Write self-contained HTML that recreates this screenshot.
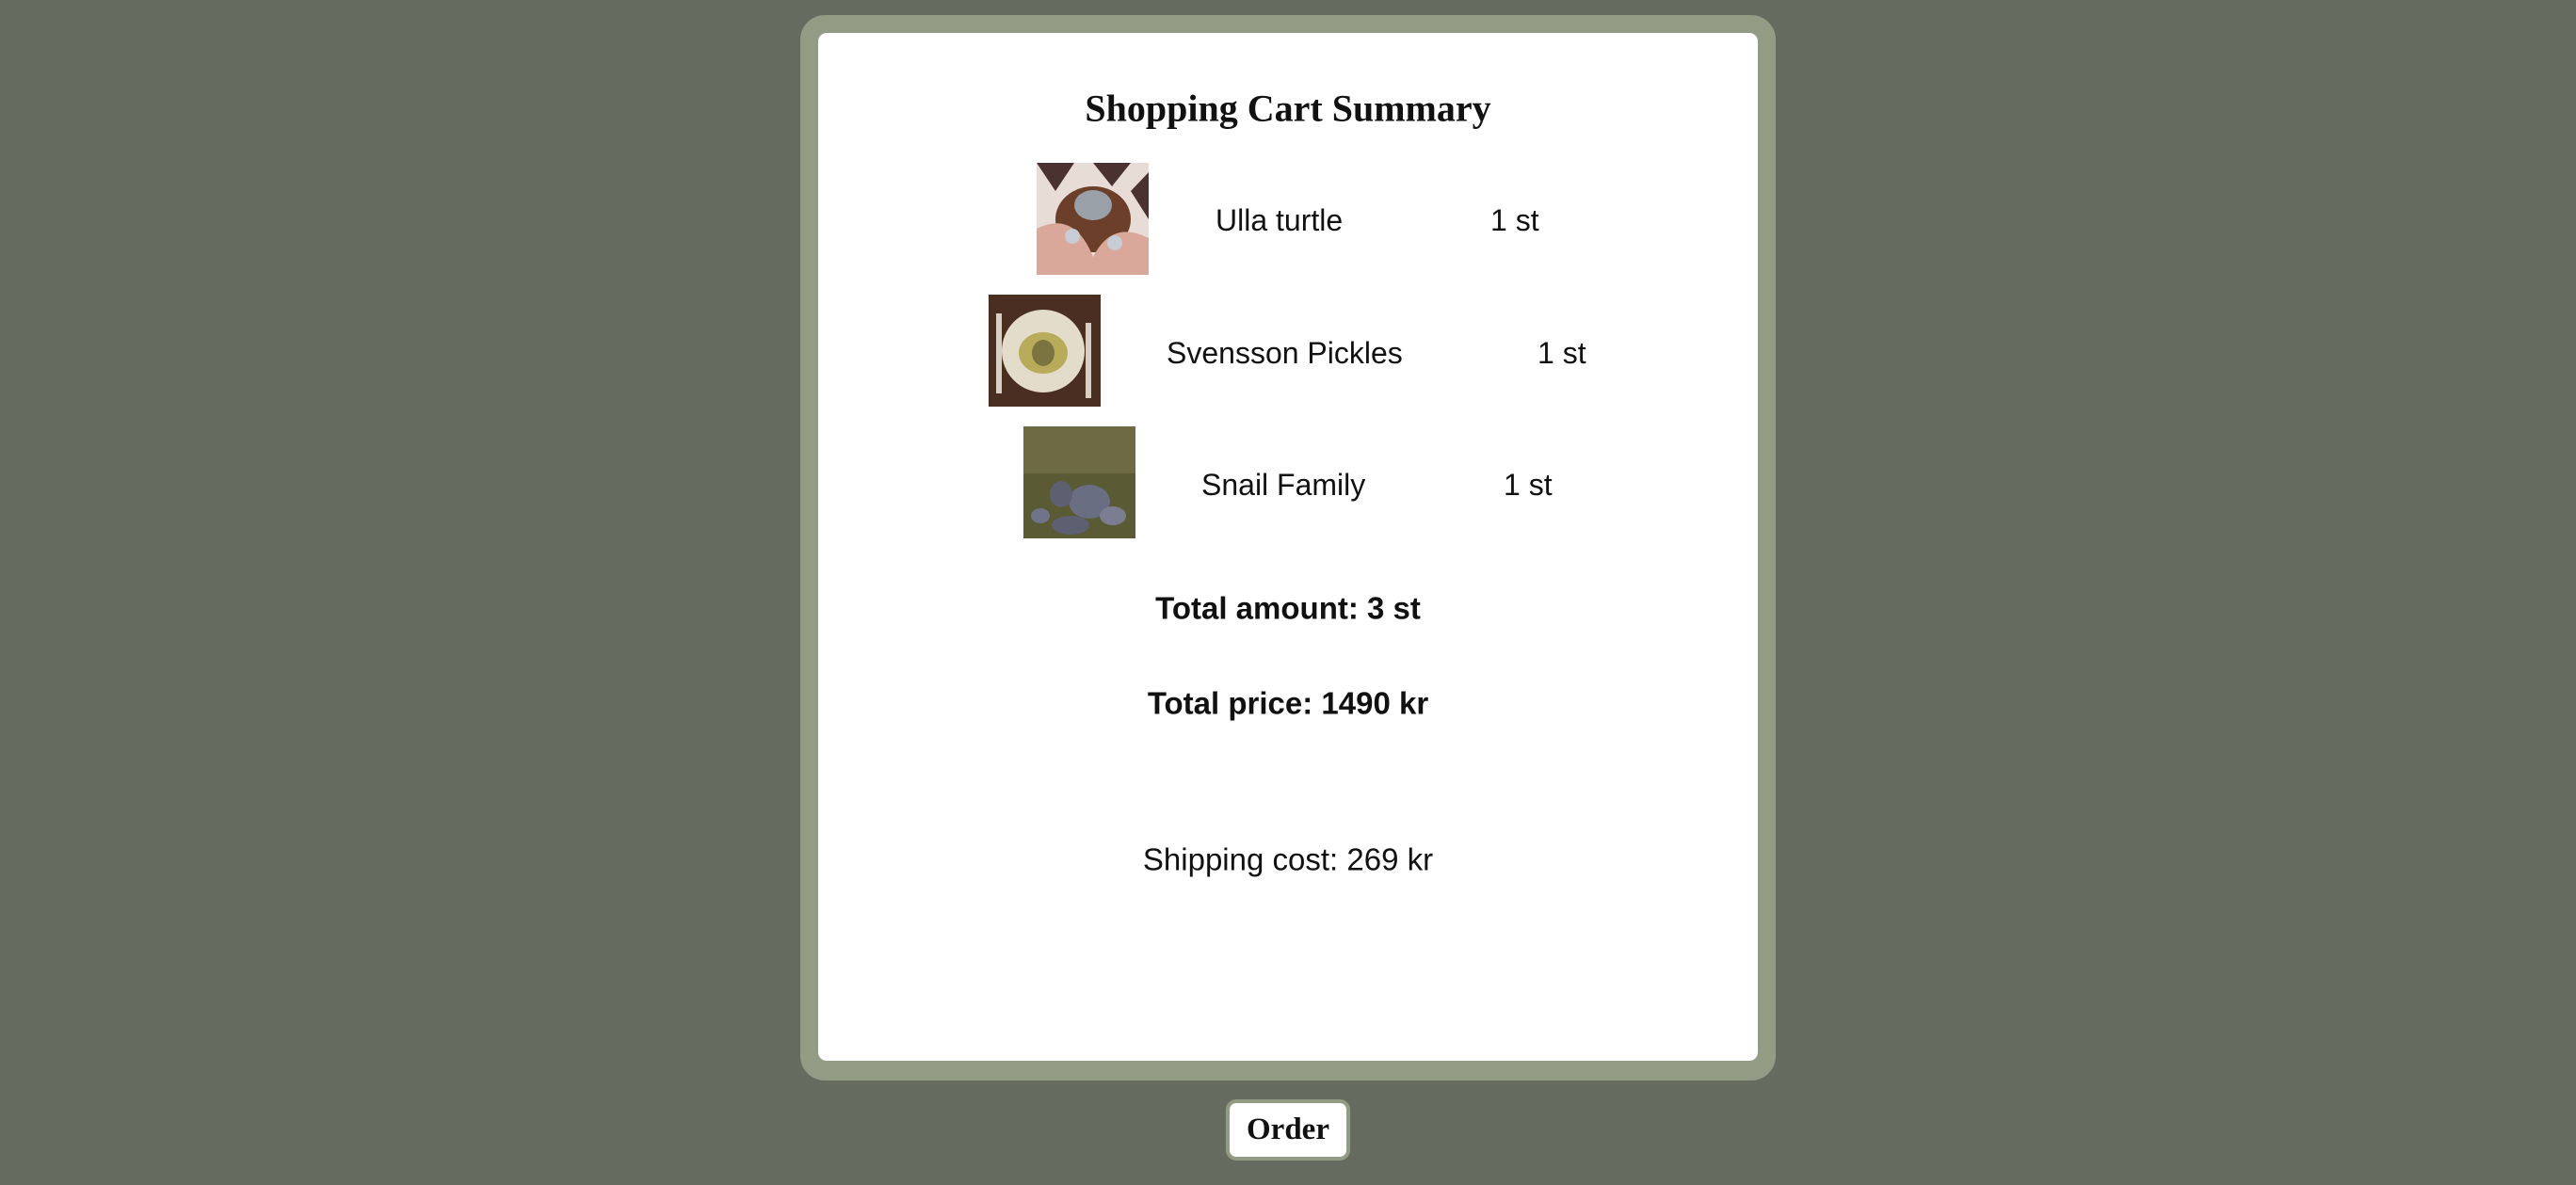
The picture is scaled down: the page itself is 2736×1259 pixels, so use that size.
<!DOCTYPE html>
<html><head><meta charset="utf-8"><style>
html,body{margin:0;padding:0;width:2736px;height:1259px;background:#656b5f;overflow:hidden;font-family:"Liberation Sans",sans-serif;color:#111}
.outer{position:absolute;left:850px;top:16px;width:1036px;height:1132px;background:#929c84;border-radius:26px}
.inner{position:absolute;left:869px;top:35px;width:998px;height:1092px;background:#fff;border-radius:9px}
.t{position:absolute;white-space:nowrap;line-height:1}
.c{transform:translate(-50%,-50%)}
.m{transform:translateY(-50%)}
.img{position:absolute;width:119px;height:119px;overflow:hidden}
.btn{position:absolute;left:1302px;top:1168px;width:124px;height:57px;background:#fff;border:4px solid #929c84;border-radius:11px;font:bold 33px "Liberation Serif",serif;display:flex;align-items:center;justify-content:center}
</style></head><body>
<div class="outer"></div><div class="inner"></div>
<div class="t c" style="left:1368px;top:115px;font:bold 40px 'Liberation Serif',serif">Shopping Cart Summary</div>

<div class="img" style="left:1101px;top:173px"><svg width="119" height="119"><rect width="119" height="119" fill="#e8dcd6"/><path d="M0 0L40 0 20 30ZM60 0L100 0 80 25ZM100 30L119 10 119 60Z" fill="#4a3230"/><ellipse cx="60" cy="60" rx="40" ry="35" fill="#6b3f2a"/><ellipse cx="60" cy="45" rx="20" ry="16" fill="#9aa0a8"/><path d="M0 70Q40 50 60 100 80 60 119 80L119 119 0 119Z" fill="#d9a89a"/><circle cx="38" cy="78" r="8" fill="#c8ccd4"/><circle cx="83" cy="85" r="8" fill="#c8ccd4"/></svg></div>
<div class="t m" style="left:1291px;top:234px;font-size:32px">Ulla turtle</div>
<div class="t m" style="left:1583px;top:234px;font-size:32px">1 st</div>

<div class="img" style="left:1050px;top:313px"><svg width="119" height="119"><rect width="119" height="119" fill="#4a2e22"/><circle cx="58" cy="60" r="44" fill="#e4dccb"/><ellipse cx="58" cy="62" rx="26" ry="22" fill="#b8ac5a"/><ellipse cx="58" cy="62" rx="12" ry="14" fill="#7c7440"/><rect x="8" y="20" width="6" height="85" fill="#d8d0c4"/><rect x="103" y="30" width="6" height="80" fill="#d8d0c4"/></svg></div>
<div class="t m" style="left:1239px;top:375px;font-size:32px">Svensson Pickles</div>
<div class="t m" style="left:1633px;top:375px;font-size:32px">1 st</div>

<div class="img" style="left:1087px;top:453px"><svg width="119" height="119"><rect width="119" height="119" fill="#5a5a34"/><rect width="119" height="50" fill="#6e6a44"/><ellipse cx="70" cy="80" rx="22" ry="18" fill="#6a6e82"/><ellipse cx="40" cy="72" rx="12" ry="14" fill="#5c6070"/><ellipse cx="50" cy="105" rx="20" ry="10" fill="#5c6070"/><ellipse cx="95" cy="95" rx="14" ry="10" fill="#7a7e90"/><ellipse cx="18" cy="95" rx="10" ry="8" fill="#70748a"/></svg></div>
<div class="t m" style="left:1276px;top:515px;font-size:32px">Snail Family</div>
<div class="t m" style="left:1597px;top:515px;font-size:32px">1 st</div>

<div class="t c" style="left:1368px;top:646px;font-size:33px;font-weight:bold">Total amount: 3 st</div>
<div class="t c" style="left:1368px;top:747px;font-size:33px;font-weight:bold">Total price: 1490 kr</div>
<div class="t c" style="left:1368px;top:913px;font-size:33px">Shipping cost: 269 kr</div>
<div class="btn">Order</div>
</body></html>
